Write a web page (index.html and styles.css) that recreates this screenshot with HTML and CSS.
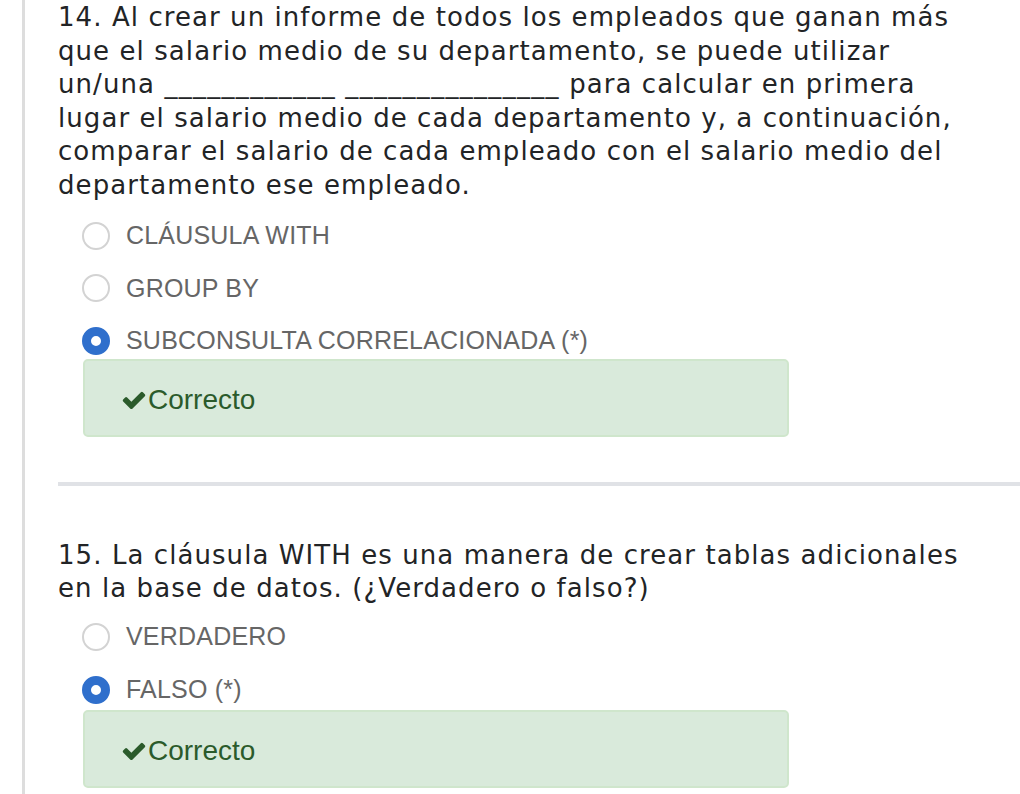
FILE: index.html
```html
<!DOCTYPE html>
<html lang="es">
<head>
<meta charset="utf-8">
<title>Cuestionario</title>
<link rel="stylesheet" href="styles.css">
</head>
<body>
<div class="page">
  <section class="question">
    <p class="q-text">14. Al crear un informe de todos los empleados que ganan más que el salario medio de su departamento, se puede utilizar un/una <span class="blank">____________</span> <span class="blank">_______________</span> para calcular en primera lugar el salario medio de cada departamento y, a continuación, comparar el salario de cada empleado con el salario medio del departamento ese empleado.</p>
    <ul class="options">
      <li class="option"><span class="radio"></span><span class="label">CLÁUSULA WITH</span></li>
      <li class="option"><span class="radio"></span><span class="label">GROUP BY</span></li>
      <li class="option"><span class="radio checked"></span><span class="label">SUBCONSULTA CORRELACIONADA (*)</span></li>
    </ul>
    <div class="feedback">
      <svg class="check" viewBox="0 0 1792 1792" aria-hidden="true"><path d="M1671 566q0 40-28 68l-724 724-136 136q-28 28-68 28t-68-28l-136-136-362-362q-28-28-28-68t28-68l136-136q28-28 68-28t68 28l294 295 656-657q28-28 68-28t68 28l136 136q28 28 28 68z"/></svg><span>Correcto</span>
    </div>
  </section>
  <hr class="divider">
  <section class="question q2">
    <p class="q-text">15. La cláusula WITH es una manera de crear tablas adicionales en la base de datos. (¿Verdadero o falso?)</p>
    <ul class="options">
      <li class="option"><span class="radio"></span><span class="label">VERDADERO</span></li>
      <li class="option"><span class="radio checked"></span><span class="label">FALSO (*)</span></li>
    </ul>
    <div class="feedback">
      <svg class="check" viewBox="0 0 1792 1792" aria-hidden="true"><path d="M1671 566q0 40-28 68l-724 724-136 136q-28 28-68 28t-68-28l-136-136-362-362q-28-28-28-68t28-68l136-136q28-28 68-28t68 28l294 295 656-657q28-28 68-28t68 28l136 136q28 28 28 68z"/></svg><span>Correcto</span>
    </div>
  </section>
</div>
</body>
</html>
```
FILE: styles.css
```css
html, body {
  margin: 0;
  padding: 0;
  background: #fff;
}
body {
  width: 1020px;
  height: 794px;
  overflow: hidden;
}
.page {
  margin-left: 22px;
  border-left: 3px solid #dddddd;
  padding-left: 33px;
  min-height: 794px;
}
.question {
  padding-top: 1px;
}
.q-text {
  margin: 0;
  width: 918px;
  font-family: "DejaVu Sans", Verdana, sans-serif;
  font-size: 26px;
  letter-spacing: 1.07px;
  line-height: 33.6px;
  color: #222426;
}
.blank {
  letter-spacing: 1.3px;
}
.options {
  list-style: none;
  margin: 15px 0 0 0;
  padding: 0 0 0 24px;
  display: flex;
  flex-direction: column;
  gap: 16.5px;
}
.option {
  height: 36px;
  display: flex;
  align-items: center;
  gap: 16px;
}
.radio {
  width: 28px;
  height: 28px;
  box-sizing: border-box;
  border-radius: 50%;
  border: 2px solid #d3d3d3;
  background: #fff;
  flex: none;
}
.radio.checked {
  border: 9px solid #2f6fcc;
  background: #fff;
}
.label {
  font-family: "Liberation Sans", Arial, sans-serif;
  font-size: 25px;
  letter-spacing: 0.2px;
  color: #666666;
}
.feedback {
  margin-left: 25px;
  width: 706px;
  height: 78px;
  box-sizing: border-box;
  border: 2px solid #cfe6cc;
  border-radius: 5px;
  background: #d9eadb;
  display: flex;
  align-items: center;
  padding: 5px 0 0 36px;
  color: #2b5b2b;
  font-family: "Liberation Sans", Arial, sans-serif;
  font-size: 28px;
}
.check {
  width: 26px;
  height: 26px;
  fill: #2b5b2b;
  margin-right: 1px;
}
.divider {
  margin: 45px 0 0 0;
  border: 0;
  height: 4px;
  background: #e0e2e6;
}
.q2 {
  padding-top: 53px;
}
.q2 .options {
  margin-top: 13px;
  gap: 17px;
}
.q2 .feedback {
  margin-top: 2px;
}
```
